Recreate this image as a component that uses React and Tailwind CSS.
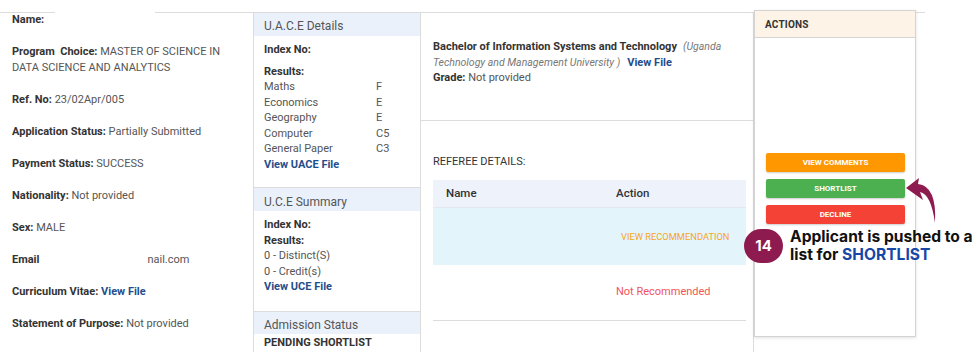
import React from "react";

const F = { fontFamily: "Roboto, 'Liberation Sans', sans-serif" };

function Row({ label, children, className = "" }) {
  return (
    <p className={className}>
      <span className="font-bold text-[#333]">{label}</span>{" "}
      <span className="text-[#555]">{children}</span>
    </p>
  );
}

export default function App() {
  return (
    <div className="relative w-[979px] h-[352px] overflow-hidden bg-white pt-[12px]" style={F}>
      <div className="flex w-[925px] h-[340px] border-t border-[#dcdcdc]">
        {/* left column */}
        <div className="w-[253px] shrink-0 pl-3 text-[11px] leading-[16px] flex flex-col gap-4">
          <Row label="Name:" className="-mt-px"></Row>
          <p className="w-[215px]">
            <span className="font-bold text-[#333]">Program&nbsp; Choice:</span>{" "}
            <span className="text-[#555]">MASTER OF SCIENCE IN DATA SCIENCE AND ANALYTICS</span>
          </p>
          <Row label="Ref. No:">23/02Apr/005</Row>
          <Row label="Application Status:">Partially Submitted</Row>
          <Row label="Payment Status:">SUCCESS</Row>
          <Row label="Nationality:">Not provided</Row>
          <Row label="Sex:">MALE</Row>
          <p>
            <span className="font-bold text-[#333]">Email</span>
            <span className="ml-[108px] text-[#555]">nail.com</span>
          </p>
          <p>
            <span className="font-bold text-[#333]">Curriculum Vitae:</span>{" "}
            <span className="font-bold text-[#1f4e8c]">View File</span>
          </p>
          <Row label="Statement of Purpose:">Not provided</Row>
        </div>

        {/* middle column */}
        <div className="w-[168px] shrink-0 border-l border-r border-[#dcdcdc] flex flex-col text-[11px]">
          <div className="h-[23px] bg-[#eaf1fb] px-[10px] pt-[5px] text-[12px] leading-[16px] text-[#555]">
            U.A.C.E Details
          </div>
          <div className="px-[10px] pt-[6px] pb-[15px] leading-[15.5px] border-b border-[#dcdcdc]">
            <p className="font-bold text-[#333]">Index No:</p>
            <p className="font-bold text-[#333] mt-[6px]">Results:</p>
            <div className="grid grid-cols-[112px_1fr] text-[#555]">
              <span>Maths</span><span>F</span>
              <span>Economics</span><span>E</span>
              <span>Geography</span><span>E</span>
              <span>Computer</span><span>C5</span>
              <span>General Paper</span><span>C3</span>
            </div>
            <p className="font-bold text-[#1f4e8c]">View UACE File</p>
          </div>
          <div className="h-[23px] bg-[#eaf1fb] px-[10px] pt-[6px] text-[12px] leading-[16px] text-[#555]">
            U.C.E Summary
          </div>
          <div className="px-[10px] pt-[6px] pb-[16px] leading-[15.5px] border-b border-[#dcdcdc]">
            <p className="font-bold text-[#333]">Index No:</p>
            <p className="font-bold text-[#333]">Results:</p>
            <p className="text-[#555]">0 - Distinct(S)</p>
            <p className="text-[#555]">0 - Credit(s)</p>
            <p className="font-bold text-[#1f4e8c]">View UCE File</p>
          </div>
          <div className="h-[22px] bg-[#eaf1fb] px-[10px] pt-[5px] text-[12px] leading-[16px] text-[#555]">
            Admission Status
          </div>
          <p className="px-[10px] pt-px font-bold text-[#333] leading-[16px]">PENDING SHORTLIST</p>
        </div>

        {/* right content */}
        <div className="w-[333px] shrink-0 border-r border-[#dcdcdc] flex flex-col text-[11px]">
          <div className="h-[108px] border-b border-[#dcdcdc] pl-3 pr-[1px] pt-[26px] leading-[15.5px]">
            <p>
              <span className="font-bold text-[#333]">Bachelor of Information Systems and Technology</span>
              <i className="ml-[6px] text-[10.5px] text-[#777]">(Uganda Technology and Management University )</i>
              <span className="ml-[7px] font-bold text-[#1f4e8c]">View File</span>
            </p>
            <p>
              <span className="font-bold text-[#333]">Grade:</span>{" "}
              <span className="text-[#555]">Not provided</span>
            </p>
          </div>
          <div className="pl-3 pr-[8px] pt-[33px]">
            <p className="text-[#333] leading-[16px]">REFEREE DETAILS:</p>
            <div className="mt-[10px] w-[313px]">
              <div className="flex h-[28px] items-center bg-[#edf2fb] border-b border-[#e3e8f0] text-[11.5px] font-medium text-[#333]">
                <span className="w-[183px] pl-[13px]">Name</span>
                <span>Action</span>
              </div>
              <div className="flex h-[57px] items-center bg-[#e4f4fb]">
                <span className="w-[183px]"></span>
                <span className="pl-[5px] text-[9.3px] text-[#f5a623] uppercase">View Recommendation</span>
              </div>
              <div className="flex h-[56px] items-center border-b border-[#dcdcdc]">
                <span className="w-[183px]"></span>
                <span className="text-[11px] text-[#f0555b]">Not Recommended</span>
              </div>
            </div>
          </div>
        </div>

        {/* actions */}
        <div className="w-[162px] shrink-0 self-start -mt-[3px] h-[327px] border border-[#d4d4d4] bg-white shadow-[0_1px_3px_rgba(0,0,0,0.12)] flex flex-col">
          <div className="h-[27px] bg-[#fdf3e6] border-b border-[#d4d4d4] pl-[10px] flex items-center text-[10px] font-bold text-[#333] tracking-[0.2px]">
            ACTIONS
          </div>
          <div className="pl-[11px] pr-[10px] pt-[115px] flex flex-col gap-[7px]">
            <button className="h-[19px] rounded-[2px] bg-[#ff9800] text-white text-[8px] font-bold shadow-[0_1px_2px_rgba(0,0,0,0.2)]">VIEW COMMENTS</button>
            <button className="h-[19px] rounded-[2px] bg-[#4caf50] text-white text-[8px] font-bold shadow-[0_1px_2px_rgba(0,0,0,0.2)]">SHORTLIST</button>
            <button className="h-[19px] rounded-[2px] bg-[#f44336] text-white text-[8px] font-bold shadow-[0_1px_2px_rgba(0,0,0,0.2)]">DECLINE</button>
          </div>
        </div>
      </div>

      {/* redaction patch on top rule */}
      <div className="absolute left-[55px] top-[8px] w-[100px] h-[8px] bg-white"></div>

      {/* annotation */}
      <div className="absolute left-[744px] top-[229px] w-[39px] h-[34px] rounded-full bg-[#8e1b4f] flex items-center justify-center text-white font-bold text-[15px]" style={{ fontFamily: "Inter, sans-serif" }}>
        14
      </div>
      <div className="absolute left-[790px] top-[228px] whitespace-nowrap text-[15.6px] leading-[18px] font-bold text-[#111]" style={{ fontFamily: "Inter, sans-serif" }}>
        <p>Applicant is pushed to a</p>
        <p>list for <span className="text-[#1747a6]">SHORTLIST</span></p>
      </div>
      <svg className="absolute left-[900px] top-[176px]" width="50" height="52" viewBox="0 0 50 52">
        <path d="M6 12 L19 2 L18 8 Q37 10 35 47 Q31 18 20 16 L23 24 Z" fill="#8e1b4f" />
      </svg>
    </div>
  );
}
